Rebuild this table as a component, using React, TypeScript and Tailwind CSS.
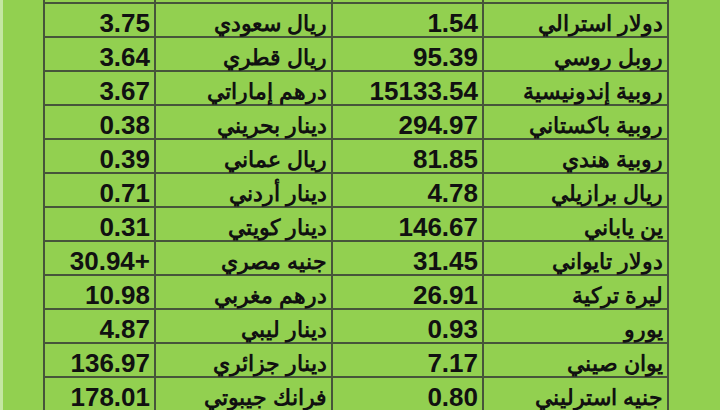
const ROWS = [
  { n1: "دولار استرالي", v1: "1.54", n2: "ريال سعودي", v2: "3.75" },
  { n1: "روبل روسي", v1: "95.39", n2: "ريال قطري", v2: "3.64" },
  { n1: "روبية إندونيسية", v1: "15133.54", n2: "درهم إماراتي", v2: "3.67" },
  { n1: "روبية باكستاني", v1: "294.97", n2: "دينار بحريني", v2: "0.38" },
  { n1: "روبية هندي", v1: "81.85", n2: "ريال عماني", v2: "0.39" },
  { n1: "ريال برازيلي", v1: "4.78", n2: "دينار أردني", v2: "0.71" },
  { n1: "ين ياباني", v1: "146.67", n2: "دينار كويتي", v2: "0.31" },
  { n1: "دولار تايواني", v1: "31.45", n2: "جنيه مصري", v2: "30.94+" },
  { n1: "ليرة تركية", v1: "26.91", n2: "درهم مغربي", v2: "10.98" },
  { n1: "يورو", v1: "0.93", n2: "دينار ليبي", v2: "4.87" },
  { n1: "يوان صيني", v1: "7.17", n2: "دينار جزائري", v2: "136.97" },
  { n1: "جنيه استرليني", v1: "0.80", n2: "فرانك جيبوتي", v2: "178.01" },
]

const cell = "bg-[#92d050] flex items-end px-[4px] whitespace-nowrap leading-none font-bold text-[#111]"
const nameCls = `${cell} justify-start pb-[1px] text-[22px] [font-family:'FreeSans',sans-serif]`
const valueCls = `${cell} justify-end text-[26px] [font-family:'Liberation_Sans',Arial,sans-serif]`

export default function App() {
  return (
    <div className="flex h-[410px] w-[720px] overflow-hidden bg-[#92d050]">
      <div className="w-[3px] shrink-0 bg-[#c4e6a2]" />
      <div className="ml-[40px]">
        <div
          dir="rtl"
          className="grid grid-cols-[183px_149px_175px_109px] grid-rows-[2px] auto-rows-[32px] gap-[2px] bg-[#46553a] px-[2px] pb-[2px]"
        >
          {/* partial header row cut off at the top */}
          <div className="bg-[#92d050]" />
          <div className="bg-[#92d050]" />
          <div className="bg-[#92d050]" />
          <div className="bg-[#92d050]" />

          {ROWS.map((r) => (
            <div key={r.n1} className="contents">
              <div className={nameCls}>{r.n1}</div>
              <div dir="ltr" className={valueCls}>{r.v1}</div>
              <div className={nameCls}>{r.n2}</div>
              <div dir="ltr" className={valueCls}>{r.v2}</div>
            </div>
          ))}
        </div>
      </div>
    </div>
  )
}
